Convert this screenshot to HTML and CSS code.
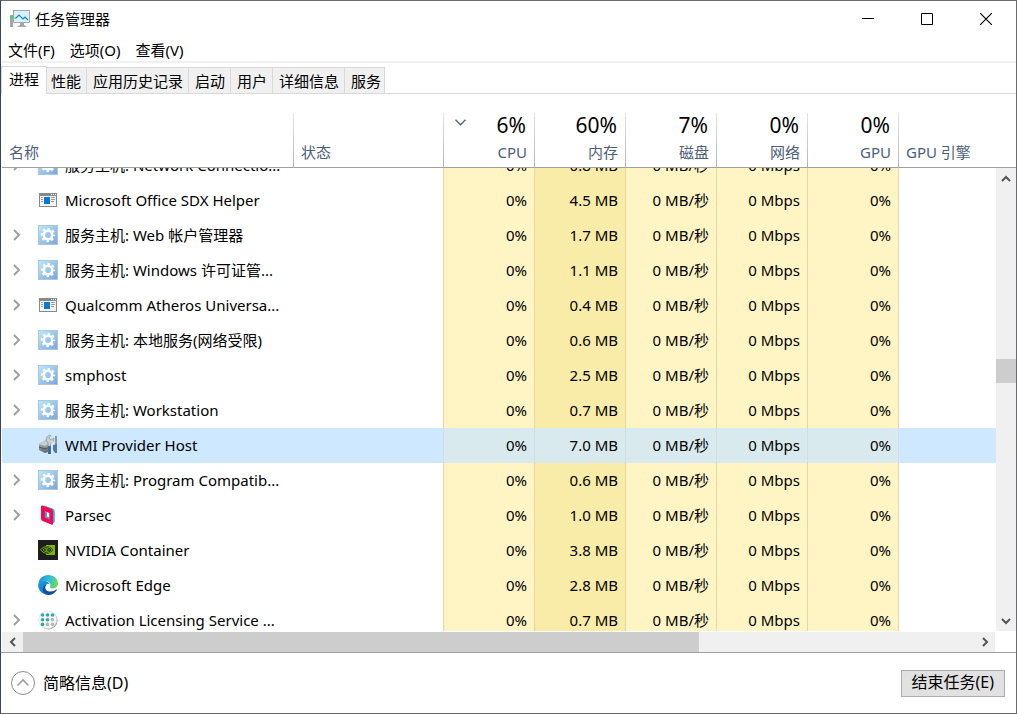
FILE: index.html
```html
<!DOCTYPE html>
<html lang="zh-CN">
<head>
<meta charset="utf-8">
<title>任务管理器</title>
<link rel="stylesheet" href="styles.css">
</head>
<body>
<svg class="sprite" aria-hidden="true">
  <defs>
    <linearGradient id="g-blue" x1="0" y1="0" x2="1" y2="1">
      <stop offset="0" stop-color="#b9ecfb"/><stop offset="1" stop-color="#7ba3df"/>
    </linearGradient>
    <linearGradient id="g-edge-top" x1="0" y1="0.3" x2="1" y2="0.6">
      <stop offset="0" stop-color="#1c8fd0"/><stop offset="0.5" stop-color="#2fc0dc"/><stop offset="1" stop-color="#6fdc55"/>
    </linearGradient>
    <linearGradient id="g-edge-left" x1="0" y1="0" x2="0.6" y2="1">
      <stop offset="0" stop-color="#1ba0e2"/><stop offset="1" stop-color="#0f6fc6"/>
    </linearGradient>
    <linearGradient id="g-metal" x1="0" y1="0" x2="0" y2="1">
      <stop offset="0" stop-color="#c3cbcd"/><stop offset="1" stop-color="#5b686e"/>
    </linearGradient>
  </defs>
  <symbol id="i-gear" viewBox="0 0 20 20">
    <rect x="0.5" y="0.5" width="19" height="19" fill="url(#g-blue)" stroke="#b3c6d8"/>
    <circle cx="10" cy="10" r="4.2" fill="none" stroke="#fff" stroke-width="2.6"/>
    <circle cx="10" cy="10" r="6.1" fill="none" stroke="#fff" stroke-width="2.2" stroke-dasharray="2.4 2.39" stroke-dashoffset="1.2"/>
  </symbol>
  <symbol id="i-app" viewBox="0 0 20 20">
    <rect x="1.5" y="3.5" width="17" height="13" fill="#f4f4f4" stroke="#85888c"/>
    <path d="M1 3h18v3H1z" fill="#85888c"/>
    <path d="M13 4h1v1h-1zM15 4h1v1h-1zM17 4h1v1h-1z" fill="#fff"/>
    <path d="M6 7h6v7H6z" fill="#0a78d6"/>
    <path d="M3 7.5h2M3 9.5h2M3 11.5h2M13 7.5h4M13 9.5h4M13 11.5h3" stroke="#9a9a9a"/>
  </symbol>
  <symbol id="i-wmi" viewBox="0 0 20 20">
    <path d="M1 9l6-4 6 2v9l-6 2-6-3z" fill="url(#g-metal)"/>
    <path d="M1 9l6-3 5 2-5 3z" fill="#c5cfd1"/>
    <path d="M1 12l6 2 5-2" fill="none" stroke="#48545a"/>
    <path d="M8 5c0-3 2-5 5-5l-2 3 2 2 3-2c0 3-1 4-3 5l-1 4-2-1V8z" fill="#c9ced0" stroke="#899398" stroke-width=".7"/>
    <path d="M17 1h2v10h-2z" fill="#8d979c"/>
    <path d="M10 11h3v8h-3z" fill="#3f69a8"/>
    <path d="M15 10l4-1v9h-2l-2-3z" fill="#4f78b5"/>
    <path d="M14 6v12" stroke="#eef2f4"/>
  </symbol>
  <symbol id="i-parsec" viewBox="0 0 20 20">
    <path d="M5 0L14.500 3.500Q16.800 4.500 16.800 6.500V17L14 19V7z" fill="#35a8f4"/>
    <path d="M7 5l5 2v8l-5-2z" fill="#fff"/>
    <path d="M7 5l2 1v5.500l3 1.500v2l-5-2z" fill="#35a8f4"/>
    <path fill-rule="evenodd" fill="#f8064f" d="M4.500.5L13.500 4Q15 4.700 15 6.500V18.500Q15 20.300 13.300 19.500L4.500 16Q3 15.200 3 13.500V1.500Q3 0 4.500.5zM7 6V12.500L11.300 14.500V8z"/>
  </symbol>
  <symbol id="i-nvidia" viewBox="0 0 20 20">
    <path d="M0 0h20v20H0z" fill="#1d1d1f"/>
    <path d="M8 5h9v10H8z" fill="#76b900"/>
    <path d="M2 10Q5 6 9 6.200T15 10Q12 14 8 14T2 10z" fill="#1d1d1f"/>
    <path d="M2.500 9.700Q5 6.500 8.700 6.700T14 10Q11.500 13.500 8.200 13.300T2.500 9.700zM5 9.800Q6.500 8 8.600 8.200T11.600 10Q10.500 11.800 8.500 11.700T5 9.800z" fill="none" stroke="#76b900" stroke-width=".9"/>
    <circle cx="8.500" cy="10" r="1" fill="#76b900"/>
  </symbol>
  <symbol id="i-edge" viewBox="0 0 20 20">
    <path d="M.3 9C1 3.500 5 0 10.200 0 16 0 20 4 20 8.600c0 3-2.200 4.900-4.900 4.900-2.300 0-3.400-.8-3.100-1.600.9-1.400.5-4.400-2.600-5.300C6 5.500 1.700 6.500.3 9z" fill="url(#g-edge-top)"/>
    <path d="M.2 9.500C.8 6.500 4 5.500 7 6c2.800.5 4.500 2 5 3.500C11 8.300 9 8.500 8 10c-2 3 0 7.500 5 8.500-1 1-2 1.300-3.500 1.300C4 19.600-.3 15 .2 9.500z" fill="url(#g-edge-left)"/>
    <path d="M8.300 9.500C6 12 7 15.500 10.500 16.300c3 .7 6-.5 7.800-1.800.5-.3.9.1.6.5C17 18 14 20 10.500 20 6.500 19.500 4 15.500 5.300 12.300 6 10.700 7 9.900 8.300 9.500z" fill="#114f99"/>
  </symbol>
  <symbol id="i-grid" viewBox="0 0 20 20">
    <circle cx="10.500" cy="10.500" r="9" fill="#8e9696"/>
    <circle cx="9.700" cy="9.700" r="9" fill="#f7f9f9" stroke="#dcdfdf" stroke-width=".7"/>
    <g fill="#2fa9a3">
      <circle cx="4.500" cy="5" r="1.800"/><circle cx="9.500" cy="5" r="1.800"/><circle cx="14.500" cy="5" r="1.800"/>
      <circle cx="4.500" cy="9.700" r="1.800"/><circle cx="9.500" cy="9.700" r="1.800"/><circle cx="4.500" cy="14.400" r="1.800"/>
    </g>
    <g fill="#b3b8b8"><circle cx="14.500" cy="9.700" r="1.800"/><circle cx="9.500" cy="14.400" r="1.800"/><circle cx="14.500" cy="14.400" r="1.800"/></g>
  </symbol>
  <symbol id="i-chev" viewBox="0 0 10 12"><path d="M2 1l5 5-5 5" fill="none" stroke="#a0a0a0" stroke-width="2"/></symbol>
</svg>

<main class="window">
  <header class="titlebar">
    <svg class="logo" viewBox="0 0 20 18" aria-hidden="true">
      <path d="M0 5h3v12H0z" fill="#a4a7aa"/><path d="M0 6h3v2H0z" fill="#4fd05a"/>
      <path d="M3.500.5h16v12h-16z" fill="#d7f0fb" stroke="#a3a8ac"/>
      <path d="M4.500 8h1.500l3-3 4 4 2-2 3 3" fill="none" stroke="#1787c8" stroke-width="1.200"/>
      <path d="M10 13h4v2l3 2H7l3-2z" fill="#a4a7aa"/>
    </svg>
    <h1 class="title">任务管理器</h1>
    <button class="caption" type="button" aria-label="最小化"><svg class="capicon" viewBox="0 0 12 12"><path d="M0 5.500h12" stroke="#000"/></svg></button>
    <button class="caption" type="button" aria-label="最大化"><svg class="capicon" viewBox="0 0 12 12"><path d="M.5.5h11v11H.5z" fill="none" stroke="#000"/></svg></button>
    <button class="caption" type="button" aria-label="关闭"><svg class="capicon" viewBox="0 0 12 12"><path d="M0 0l12 12M12 0L0 12" stroke="#000" stroke-width="1.200"/></svg></button>
  </header>

  <nav class="menubar">
    <button class="menu" type="button">文件(F)</button>
    <button class="menu" type="button">选项(O)</button>
    <button class="menu" type="button">查看(V)</button>
  </nav>

  <div class="tabs" role="tablist">
    <button class="tab active" type="button" role="tab" aria-selected="true">进程</button>
    <button class="tab" type="button" role="tab">性能</button>
    <button class="tab" type="button" role="tab">应用历史记录</button>
    <button class="tab" type="button" role="tab">启动</button>
    <button class="tab" type="button" role="tab">用户</button>
    <button class="tab" type="button" role="tab">详细信息</button>
    <button class="tab last" type="button" role="tab">服务</button>
  </div>

  <section class="pane">
    <div class="heading">
      <table class="grid">
        <colgroup><col class="c-name"><col class="c-status"><col class="c-num"><col class="c-num"><col class="c-num"><col class="c-num"><col class="c-num"><col></colgroup>
        <thead>
          <tr>
            <th class="left">名称</th>
            <th class="left">状态</th>
            <th><span class="total"><svg class="sort" viewBox="0 0 11 7" aria-hidden="true"><path d="M.5.800l5 5 5-5" fill="none" stroke="#4c607a" stroke-width="1.300"/></svg>6%</span>CPU</th>
            <th><span class="total">60%</span>内存</th>
            <th><span class="total">7%</span>磁盘</th>
            <th><span class="total">0%</span>网络</th>
            <th><span class="total">0%</span>GPU</th>
            <th class="left end">GPU 引擎</th>
          </tr>
        </thead>
      </table>
    </div>

    <div class="scroller">
      <div class="viewport">
        <table class="grid rows">
          <colgroup><col class="c-name"><col class="c-status"><col class="c-num"><col class="c-num"><col class="c-num"><col class="c-num"><col class="c-num"><col></colgroup>
          <tbody>
            <tr><td><div class="proc"><button class="expand" type="button" aria-label="展开"><svg class="chev"><use href="#i-chev"/></svg></button><svg class="icon"><use href="#i-gear"/></svg>服务主机: Network Connectio...</div></td><td></td><td>0%</td><td>0.8 MB</td><td>0 MB/秒</td><td>0 Mbps</td><td>0%</td><td></td></tr>
            <tr><td><div class="proc"><span class="expand"></span><svg class="icon"><use href="#i-app"/></svg>Microsoft Office SDX Helper</div></td><td></td><td>0%</td><td>4.5 MB</td><td>0 MB/秒</td><td>0 Mbps</td><td>0%</td><td></td></tr>
            <tr><td><div class="proc"><button class="expand" type="button" aria-label="展开"><svg class="chev"><use href="#i-chev"/></svg></button><svg class="icon"><use href="#i-gear"/></svg>服务主机: Web 帐户管理器</div></td><td></td><td>0%</td><td>1.7 MB</td><td>0 MB/秒</td><td>0 Mbps</td><td>0%</td><td></td></tr>
            <tr><td><div class="proc"><button class="expand" type="button" aria-label="展开"><svg class="chev"><use href="#i-chev"/></svg></button><svg class="icon"><use href="#i-gear"/></svg>服务主机: Windows 许可证管...</div></td><td></td><td>0%</td><td>1.1 MB</td><td>0 MB/秒</td><td>0 Mbps</td><td>0%</td><td></td></tr>
            <tr><td><div class="proc"><button class="expand" type="button" aria-label="展开"><svg class="chev"><use href="#i-chev"/></svg></button><svg class="icon"><use href="#i-app"/></svg>Qualcomm Atheros Universa...</div></td><td></td><td>0%</td><td>0.4 MB</td><td>0 MB/秒</td><td>0 Mbps</td><td>0%</td><td></td></tr>
            <tr><td><div class="proc"><button class="expand" type="button" aria-label="展开"><svg class="chev"><use href="#i-chev"/></svg></button><svg class="icon"><use href="#i-gear"/></svg>服务主机: 本地服务(网络受限)</div></td><td></td><td>0%</td><td>0.6 MB</td><td>0 MB/秒</td><td>0 Mbps</td><td>0%</td><td></td></tr>
            <tr><td><div class="proc"><button class="expand" type="button" aria-label="展开"><svg class="chev"><use href="#i-chev"/></svg></button><svg class="icon"><use href="#i-gear"/></svg>smphost</div></td><td></td><td>0%</td><td>2.5 MB</td><td>0 MB/秒</td><td>0 Mbps</td><td>0%</td><td></td></tr>
            <tr><td><div class="proc"><button class="expand" type="button" aria-label="展开"><svg class="chev"><use href="#i-chev"/></svg></button><svg class="icon"><use href="#i-gear"/></svg>服务主机: Workstation</div></td><td></td><td>0%</td><td>0.7 MB</td><td>0 MB/秒</td><td>0 Mbps</td><td>0%</td><td></td></tr>
            <tr class="selected"><td><div class="proc"><span class="expand"></span><svg class="icon"><use href="#i-wmi"/></svg>WMI Provider Host</div></td><td></td><td>0%</td><td>7.0 MB</td><td>0 MB/秒</td><td>0 Mbps</td><td>0%</td><td></td></tr>
            <tr><td><div class="proc"><button class="expand" type="button" aria-label="展开"><svg class="chev"><use href="#i-chev"/></svg></button><svg class="icon"><use href="#i-gear"/></svg>服务主机: Program Compatib...</div></td><td></td><td>0%</td><td>0.6 MB</td><td>0 MB/秒</td><td>0 Mbps</td><td>0%</td><td></td></tr>
            <tr><td><div class="proc"><button class="expand" type="button" aria-label="展开"><svg class="chev"><use href="#i-chev"/></svg></button><svg class="icon"><use href="#i-parsec"/></svg>Parsec</div></td><td></td><td>0%</td><td>1.0 MB</td><td>0 MB/秒</td><td>0 Mbps</td><td>0%</td><td></td></tr>
            <tr><td><div class="proc"><span class="expand"></span><svg class="icon"><use href="#i-nvidia"/></svg>NVIDIA Container</div></td><td></td><td>0%</td><td>3.8 MB</td><td>0 MB/秒</td><td>0 Mbps</td><td>0%</td><td></td></tr>
            <tr><td><div class="proc"><span class="expand"></span><svg class="icon"><use href="#i-edge"/></svg>Microsoft Edge</div></td><td></td><td>0%</td><td>2.8 MB</td><td>0 MB/秒</td><td>0 Mbps</td><td>0%</td><td></td></tr>
            <tr><td><div class="proc"><button class="expand" type="button" aria-label="展开"><svg class="chev"><use href="#i-chev"/></svg></button><svg class="icon"><use href="#i-grid"/></svg>Activation Licensing Service ...</div></td><td></td><td>0%</td><td>0.7 MB</td><td>0 MB/秒</td><td>0 Mbps</td><td>0%</td><td></td></tr>
          </tbody>
        </table>
      </div>
      <div class="vbar">
        <button class="arrow" type="button" aria-label="向上滚动"><svg class="glyph" viewBox="0 0 10 10"><path d="M1 8l4-4 4 4" fill="none" stroke="#555" stroke-width="2"/></svg></button>
        <div class="track"><span class="before"></span><span class="thumb"></span><span class="after"></span></div>
        <button class="arrow" type="button" aria-label="向下滚动"><svg class="glyph" viewBox="0 0 10 10"><path d="M1 3l4 4 4-4" fill="none" stroke="#555" stroke-width="2"/></svg></button>
      </div>
    </div>
    <div class="hbar">
      <button class="arrow" type="button" aria-label="向左滚动"><svg class="glyph" viewBox="0 0 10 10"><path d="M7 1L3 5l4 4" fill="none" stroke="#555" stroke-width="2"/></svg></button>
      <div class="track"><span class="thumb"></span><span class="after"></span></div>
      <button class="arrow" type="button" aria-label="向右滚动"><svg class="glyph" viewBox="0 0 10 10"><path d="M3 1l4 4-4 4" fill="none" stroke="#555" stroke-width="2"/></svg></button>
    </div>
  </section>

  <footer class="footer">
    <button class="less" type="button">
      <svg class="circle" viewBox="0 0 24 24" aria-hidden="true"><circle cx="12" cy="12" r="11.500" fill="#fff" stroke="#8c8c8c"/><path d="M6.500 14.500L12 9l5.500 5.500" fill="none" stroke="#a0a0a0" stroke-width="1.600"/></svg>
      简略信息(D)
    </button>
    <button class="endtask" type="button">结束任务(E)</button>
  </footer>
</main>
</body>
</html>
```
FILE: styles.css
```css
* { box-sizing: border-box; }

body {
  margin: 0;
  background: #fff;
  color: #000;
  font-family: "Noto Sans", "Noto Sans CJK SC", sans-serif;
  font-size: 15px;
  line-height: 20px;
}

button {
  margin: 0;
  padding: 0;
  border: 0;
  background: none;
  color: inherit;
  font: inherit;
  white-space: nowrap;
}

svg { display: block; flex: none; }
.sprite { position: absolute; width: 0; height: 0; }

.window {
  display: flex;
  flex-direction: column;
  height: 100vh;
  border: 1px solid #6b6b6d;
  border-left-color: #3c4352;
}

/* Title bar */
.titlebar { display: flex; align-items: center; height: 37px; padding: 0 1px 2px 9px; }
.logo { width: 20px; height: 18px; }
.title { flex: 1; margin: 0; padding-left: 5px; font-size: 15px; font-weight: 400; }
.caption { display: flex; align-items: center; justify-content: center; width: 59px; height: 34px; }
.capicon { width: 12px; height: 12px; }

/* Menu */
.menubar {
  display: flex;
  gap: 15px;
  height: 25px;
  padding: 2px 7px 3px;
  border-bottom: 2px solid #f0f0f0;
}

/* Tabs */
.tabs {
  display: flex;
  align-items: flex-end;
  height: 31px;
  border-bottom: 1px solid #d9d9d9;
}
.tab {
  height: 26px;
  padding: 0 5px 0 6px;
  border: 1px solid #d9d9d9;
  border-width: 1px 0 0 1px;
  background: #f0f0f0;
}
.tab.last { padding-right: 3px; border-right-width: 1px; }
.tab.active {
  z-index: 1;
  height: 28px;
  margin: 0 -3px -1px 0;
  padding: 0 7px 3px;
  border-width: 1px 1px 0;
  background: #fff;
}

/* Process list */
.pane { display: flex; flex: 1; flex-direction: column; min-height: 0; padding-left: 1px; }
.heading { padding: 19px 20px 0 0; border-bottom: 1px solid #a0a0a0; }

.grid { width: 100%; border-collapse: separate; border-spacing: 0; table-layout: fixed; }
.c-name { width: 292px; }
.c-status { width: 150px; }
.c-num { width: 91px; }

th {
  height: 54px;
  padding: 0 7px 5px 0;
  border-right: 1px solid;
  border-image: linear-gradient(#e6e6e6, #b4b4b4) 1;
  color: #4c607a;
  font-weight: 400;
  text-align: right;
  vertical-align: bottom;
  white-space: nowrap;
}
th.left { padding-left: 7px; text-align: left; }
th.end { border: 0; }
.total {
  display: flex;
  align-items: center;
  justify-content: flex-end;
  height: 22px;
  margin-bottom: 6px;
  padding-right: 1px;
  color: #000;
  font-size: 21px;
}
.sort { width: 11px; height: 7px; margin: 0 auto 6px 11px; }

.scroller { display: flex; flex: 1; min-height: 0; }
.viewport { flex: 1; min-width: 0; overflow: hidden; }
.rows { margin-top: -20px; }

td {
  height: 35px;
  padding: 0 7px 2px 0;
  border-right: 1px solid #e8d6a0;
  background: #fff4c4;
  text-align: right;
  white-space: nowrap;
}
td:nth-child(1), td:last-child { border-right: 0; background: none; }
td:nth-child(2) { background: none; }
td:nth-child(4) { background: #f9eba8; }
.selected { background: #cde8ff; }
.selected td { border-right-color: #d3dfde; }
.selected td:nth-child(n+3):nth-child(-n+7) { background: #d9eaee; }
.selected td:nth-child(4) { background: #d6e8e6; }

.proc { display: flex; align-items: center; }
.expand { display: flex; flex: none; align-items: center; width: 36px; height: 20px; padding-left: 10px; }
.chev { width: 10px; height: 12px; }
.icon { width: 20px; height: 20px; margin-right: 7px; }

/* Scroll bars */
.vbar, .hbar { display: flex; background: #f0f0f0; }
.vbar { flex-direction: column; width: 20px; }
.hbar { height: 21px; margin-right: 21px; border-top: 1px solid #fff; }
.arrow { display: flex; flex: none; align-items: center; justify-content: center; width: 20px; height: 20px; }
.hbar .arrow { width: 21px; }
.glyph { width: 10px; height: 10px; }
.track { display: flex; flex: 1; }
.vbar .track { flex-direction: column; }
.vbar .before { flex: 171; }
.vbar .thumb { flex: 24; }
.vbar .after { flex: 228; }
.hbar .thumb { flex: 676; }
.hbar .after { flex: 275; }
.thumb { background: #cdcdcd; }

/* Footer */
.footer {
  display: flex;
  align-items: center;
  justify-content: space-between;
  height: 61px;
  padding: 0 11px 0 10px;
  border-top: 1px solid #a0a0a0;
  font-size: 16px;
}
.less { display: flex; align-items: center; gap: 8px; }
.circle { width: 24px; height: 24px; }
.endtask { height: 27px; padding: 0 10px 2px; border: 1px solid #adadad; background: #e1e1e1; }
```
